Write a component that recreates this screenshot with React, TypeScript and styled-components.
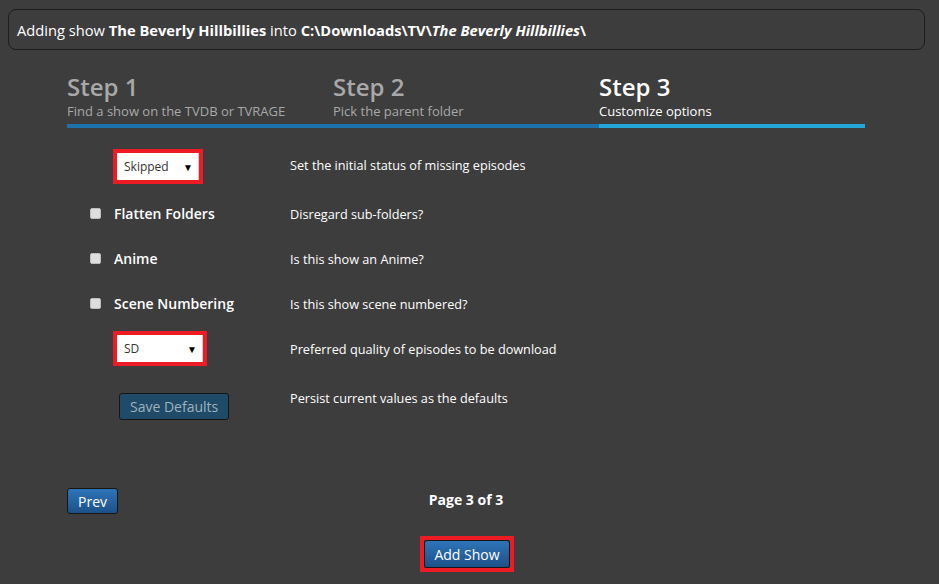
import styled, { createGlobalStyle } from 'styled-components'

const GlobalStyle = createGlobalStyle`
  html, body {
    margin: 0;
    padding: 0;
    background: #3d3d3d;
  }

  body {
    font-family: 'Open Sans', 'Liberation Sans', sans-serif;
    color: #fff;
  }
`

const StyledPage = styled.div`
  width: 939px;
  height: 584px;
  overflow: hidden;
  padding-top: 9px;
  box-sizing: border-box;
`

const StyledNotice = styled.div`
  margin: 0 14px 0 8px;
  height: 41px;
  box-sizing: border-box;
  border: 1px solid #1d1d1d;
  border-radius: 8px;
  display: flex;
  align-items: center;
  padding: 0 8px;
  font-size: 14.7px;

  b {
    font-weight: 700;
  }
`

const StyledContent = styled.div`
  width: 798px;
  margin-left: 67px;
`

const StyledSteps = styled.div`
  display: grid;
  grid-template-columns: repeat(3, 1fr);
  margin-top: 22px;
`

const StyledStep = styled.div<{ $active?: boolean }>`
  color: ${({ $active }) => ($active ? '#ffffff' : '#a8a8a8')};
  border-bottom: 4px solid ${({ $active }) => ($active ? '#23a6d8' : '#1b72ad')};
  padding-bottom: 4px;
`

const StyledStepTitle = styled.div`
  font-size: 24px;
  font-weight: 600;
  line-height: 30px;
`

const StyledStepText = styled.div`
  font-size: 13px;
  line-height: 18px;
`

const StyledForm = styled.div`
  margin-top: 13px;
`

const StyledRow = styled.div<{ $h: number; $top?: boolean }>`
  display: grid;
  grid-template-columns: 223px 1fr;
  align-items: ${({ $top }) => ($top ? 'start' : 'center')};
  height: ${({ $h }) => $h}px;
`

const StyledField = styled.div<{ $indent: number }>`
  display: flex;
  align-items: center;
  padding-left: ${({ $indent }) => $indent}px;
`

const StyledHighlight = styled.div`
  border: 4px solid #ed1c24;
  display: inline-flex;
`

const StyledSelectWrap = styled.div<{ $w: number }>`
  position: relative;
  width: ${({ $w }) => $w}px;
  height: 27px;

  span {
    position: absolute;
    right: 6px;
    top: 7px;
    font-size: 10px;
    color: #000;
    pointer-events: none;
  }
`

const StyledSelect = styled.select`
  appearance: none;
  width: 100%;
  height: 100%;
  border: none;
  border-right: 1px solid #d0d0d0;
  background: #fff;
  padding: 0 7px;
  font-family: 'Open Sans', 'Liberation Sans', sans-serif;
  font-size: 12px;
  color: #333;
  outline: none;
`

const StyledCheckbox = styled.span`
  width: 11px;
  height: 11px;
  border-radius: 2px;
  background: #dedede;
  border: 1px solid #bdbdbd;
  box-sizing: border-box;
  margin-right: 13px;
`

const StyledLabel = styled.span`
  font-size: 14px;
  font-weight: 600;
`

const StyledDesc = styled.div<{ $shift?: number }>`
  font-size: 12.7px;
  line-height: 20px;
  margin-top: ${({ $shift }) => $shift ?? 0}px;
`

const StyledButton = styled.button<{ $muted?: boolean }>`
  font-family: 'Open Sans', 'Liberation Sans', sans-serif;
  font-size: 14px;
  height: ${({ $muted }) => ($muted ? 27 : 26)}px;
  padding: 0 10px;
  border: 1px solid #151515;
  border-radius: 3px;
  color: ${({ $muted }) => ($muted ? '#9fb0bc' : '#ffffff')};
  background: ${({ $muted }) =>
    $muted ? '#1f4b69' : 'linear-gradient(#2f74b8, #1c5189)'};
  cursor: pointer;
`

const StyledPager = styled.div`
  display: grid;
  grid-template-columns: 1fr auto 1fr;
  align-items: center;
  margin-top: 65px;
`

const StyledPageText = styled.div`
  font-size: 14px;
  font-weight: 700;
  margin-top: -3px;
`

const StyledCenter = styled.div`
  display: flex;
  justify-content: center;
  margin-top: 22px;
  padding-left: 2px;
`

const StyledAddButton = styled(StyledButton)`
  height: 28px;
  width: 86px;
  padding: 0;
`

export default function App() {
  return (
    <>
      <GlobalStyle />
      <StyledPage>
        <StyledNotice>
          <span>
            Adding show <b>The Beverly Hillbillies</b> into{' '}
            <b>
              C:\Downloads\TV\<i>The Beverly Hillbillies</i>\
            </b>
          </span>
        </StyledNotice>

        <StyledContent>
          <StyledSteps>
            <StyledStep>
              <StyledStepTitle>Step 1</StyledStepTitle>
              <StyledStepText>Find a show on the TVDB or TVRAGE</StyledStepText>
            </StyledStep>
            <StyledStep>
              <StyledStepTitle>Step 2</StyledStepTitle>
              <StyledStepText>Pick the parent folder</StyledStepText>
            </StyledStep>
            <StyledStep $active>
              <StyledStepTitle>Step 3</StyledStepTitle>
              <StyledStepText>Customize options</StyledStepText>
            </StyledStep>
          </StyledSteps>

          <StyledForm>
            <StyledRow $h={50}>
              <StyledField $indent={46}>
                <StyledHighlight>
                  <StyledSelectWrap $w={82}>
                    <StyledSelect defaultValue="skipped">
                      <option value="skipped">Skipped</option>
                      <option value="wanted">Wanted</option>
                    </StyledSelect>
                    <span>▼</span>
                  </StyledSelectWrap>
                </StyledHighlight>
              </StyledField>
              <StyledDesc $shift={-2}>Set the initial status of missing episodes</StyledDesc>
            </StyledRow>

            <StyledRow $h={45}>
              <StyledField $indent={23}>
                <StyledCheckbox />
                <StyledLabel>Flatten Folders</StyledLabel>
              </StyledField>
              <StyledDesc>Disregard sub-folders?</StyledDesc>
            </StyledRow>

            <StyledRow $h={45}>
              <StyledField $indent={23}>
                <StyledCheckbox />
                <StyledLabel>Anime</StyledLabel>
              </StyledField>
              <StyledDesc>Is this show an Anime?</StyledDesc>
            </StyledRow>

            <StyledRow $h={45}>
              <StyledField $indent={23}>
                <StyledCheckbox />
                <StyledLabel>Scene Numbering</StyledLabel>
              </StyledField>
              <StyledDesc>Is this show scene numbered?</StyledDesc>
            </StyledRow>

            <StyledRow $h={45}>
              <StyledField $indent={46}>
                <StyledHighlight>
                  <StyledSelectWrap $w={86}>
                    <StyledSelect defaultValue="sd">
                      <option value="sd">SD</option>
                      <option value="hd">HD</option>
                    </StyledSelect>
                    <span>▼</span>
                  </StyledSelectWrap>
                </StyledHighlight>
              </StyledField>
              <StyledDesc>Preferred quality of episodes to be download</StyledDesc>
            </StyledRow>

            <StyledRow $h={52} $top>
              <StyledField $indent={52} style={{ paddingTop: 22 }}>
                <StyledButton $muted>Save Defaults</StyledButton>
              </StyledField>
              <StyledDesc $shift={17}>Persist current values as the defaults</StyledDesc>
            </StyledRow>
          </StyledForm>

          <StyledPager>
            <div>
              <StyledButton>Prev</StyledButton>
            </div>
            <StyledPageText>Page 3 of 3</StyledPageText>
            <div />
          </StyledPager>

          <StyledCenter>
            <StyledHighlight>
              <StyledAddButton>Add Show</StyledAddButton>
            </StyledHighlight>
          </StyledCenter>
        </StyledContent>
      </StyledPage>
    </>
  )
}
